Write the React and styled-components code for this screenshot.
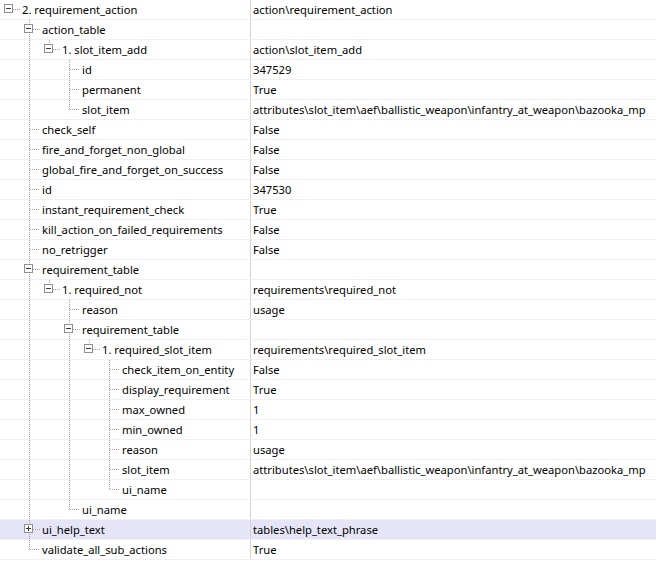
import React from "react";
import styled, { createGlobalStyle } from "styled-components";

const GlobalStyle = createGlobalStyle`
  html, body {
    margin: 0;
    padding: 0;
    background: #ffffff;
  }
  body {
    font-family: "Noto Sans", "Open Sans", sans-serif;
    font-size: 11.2px;
    color: #000000;
  }
`;

const LINE = "#a0a0a0";

// tree data, as shown in the property grid
const tree = [
  {
    name: "2. requirement_action",
    value: "action\\requirement_action",
    kind: "open",
    children: [
      {
        name: "action_table",
        kind: "open",
        children: [
          {
            name: "1. slot_item_add",
            value: "action\\slot_item_add",
            kind: "open",
            children: [
              { name: "id", value: "347529" },
              { name: "permanent", value: "True" },
              {
                name: "slot_item",
                value:
                  "attributes\\slot_item\\aef\\ballistic_weapon\\infantry_at_weapon\\bazooka_mp",
              },
            ],
          },
        ],
      },
      { name: "check_self", value: "False" },
      { name: "fire_and_forget_non_global", value: "False" },
      { name: "global_fire_and_forget_on_success", value: "False" },
      { name: "id", value: "347530" },
      { name: "instant_requirement_check", value: "True" },
      { name: "kill_action_on_failed_requirements", value: "False" },
      { name: "no_retrigger", value: "False" },
      {
        name: "requirement_table",
        kind: "open",
        children: [
          {
            name: "1. required_not",
            value: "requirements\\required_not",
            kind: "open",
            children: [
              { name: "reason", value: "usage" },
              {
                name: "requirement_table",
                kind: "open",
                children: [
                  {
                    name: "1. required_slot_item",
                    value: "requirements\\required_slot_item",
                    kind: "open",
                    children: [
                      { name: "check_item_on_entity", value: "False" },
                      { name: "display_requirement", value: "True" },
                      { name: "max_owned", value: "1" },
                      { name: "min_owned", value: "1" },
                      { name: "reason", value: "usage" },
                      {
                        name: "slot_item",
                        value:
                          "attributes\\slot_item\\aef\\ballistic_weapon\\infantry_at_weapon\\bazooka_mp",
                      },
                      { name: "ui_name" },
                    ],
                  },
                ],
              },
              { name: "ui_name" },
            ],
          },
        ],
      },
      {
        name: "ui_help_text",
        value: "tables\\help_text_phrase",
        kind: "closed",
        selected: true,
      },
      { name: "validate_all_sub_actions", value: "True" },
    ],
  },
];

const flatten = (nodes, level = 0, trail = []) =>
  nodes.flatMap((node, i) => {
    const last = i === nodes.length - 1;
    const row = { ...node, level, last, trail };
    const kids =
      node.kind === "open" && node.children
        ? flatten(node.children, level + 1, [...trail, !last])
        : [];
    return [row, ...kids];
  });

const Grid = styled.div`
  width: 656px;
  display: flex;
  flex-direction: column;
`;

const Row = styled.div`
  display: flex;
  height: 20px;
  box-sizing: border-box;
  border-bottom: 1px solid #f0f0f0;
  background: ${(p) => (p.$selected ? "#e5e5f7" : "#ffffff")};
`;

const NameCell = styled.div`
  flex: none;
  width: 251px;
  box-sizing: border-box;
  border-right: 1px solid #d4d4d4;
  display: flex;
  align-items: stretch;
  overflow: hidden;
  white-space: nowrap;
`;

const ValueCell = styled.div`
  flex: 1;
  padding-left: 2px;
  display: flex;
  align-items: center;
  white-space: nowrap;
  overflow: hidden;
`;

const Label = styled.span`
  display: flex;
  align-items: center;
  padding-left: 2px;
`;

const Slot = styled.svg`
  flex: none;
  display: block;
  width: 20px;
  height: 19px;
`;

// one 20px column of tree guides: a pass-through line, or the node's own connector
const Guide = ({ through, own, last, kind, root }) => (
  <Slot viewBox="0 0 20 19" shapeRendering="crispEdges">
    {through && (
      <line x1="9.5" y1="0" x2="9.5" y2="19" stroke={LINE} strokeDasharray="1 1" />
    )}
    {own && !root && (
      <line
        x1="9.5"
        y1="0"
        x2="9.5"
        y2={last ? 9 : 19}
        stroke={LINE}
        strokeDasharray="1 1"
      />
    )}
    {own && (
      <line
        x1={kind ? 13 : 10}
        y1="9.5"
        x2="20"
        y2="9.5"
        stroke={LINE}
        strokeDasharray="1 1"
      />
    )}
    {own && kind && (
      <g>
        <rect x="4.5" y="4.5" width="8" height="8" fill="#ffffff" stroke="#8e8f8f" />
        <line x1="6" y1="8.5" x2="11" y2="8.5" stroke="#3a3a3a" />
        {kind === "closed" && (
          <line x1="8.5" y1="6" x2="8.5" y2="11" stroke="#3a3a3a" />
        )}
      </g>
    )}
  </Slot>
);

const TreeRow = ({ row }) => {
  const slots = [];
  for (let k = 0; k < row.level; k++) {
    slots.push(<Guide key={k} through={k > 0 && row.trail[k]} />);
  }
  return (
    <Row $selected={row.selected}>
      <NameCell>
        {slots}
        <Guide own last={row.last} kind={row.kind} root={row.level === 0} />
        <Label>{row.name}</Label>
      </NameCell>
      <ValueCell>{row.value}</ValueCell>
    </Row>
  );
};

export default function App() {
  const rows = flatten(tree);
  return (
    <>
      <GlobalStyle />
      <Grid>
        {rows.map((row, i) => (
          <TreeRow key={i} row={row} />
        ))}
      </Grid>
    </>
  );
}
